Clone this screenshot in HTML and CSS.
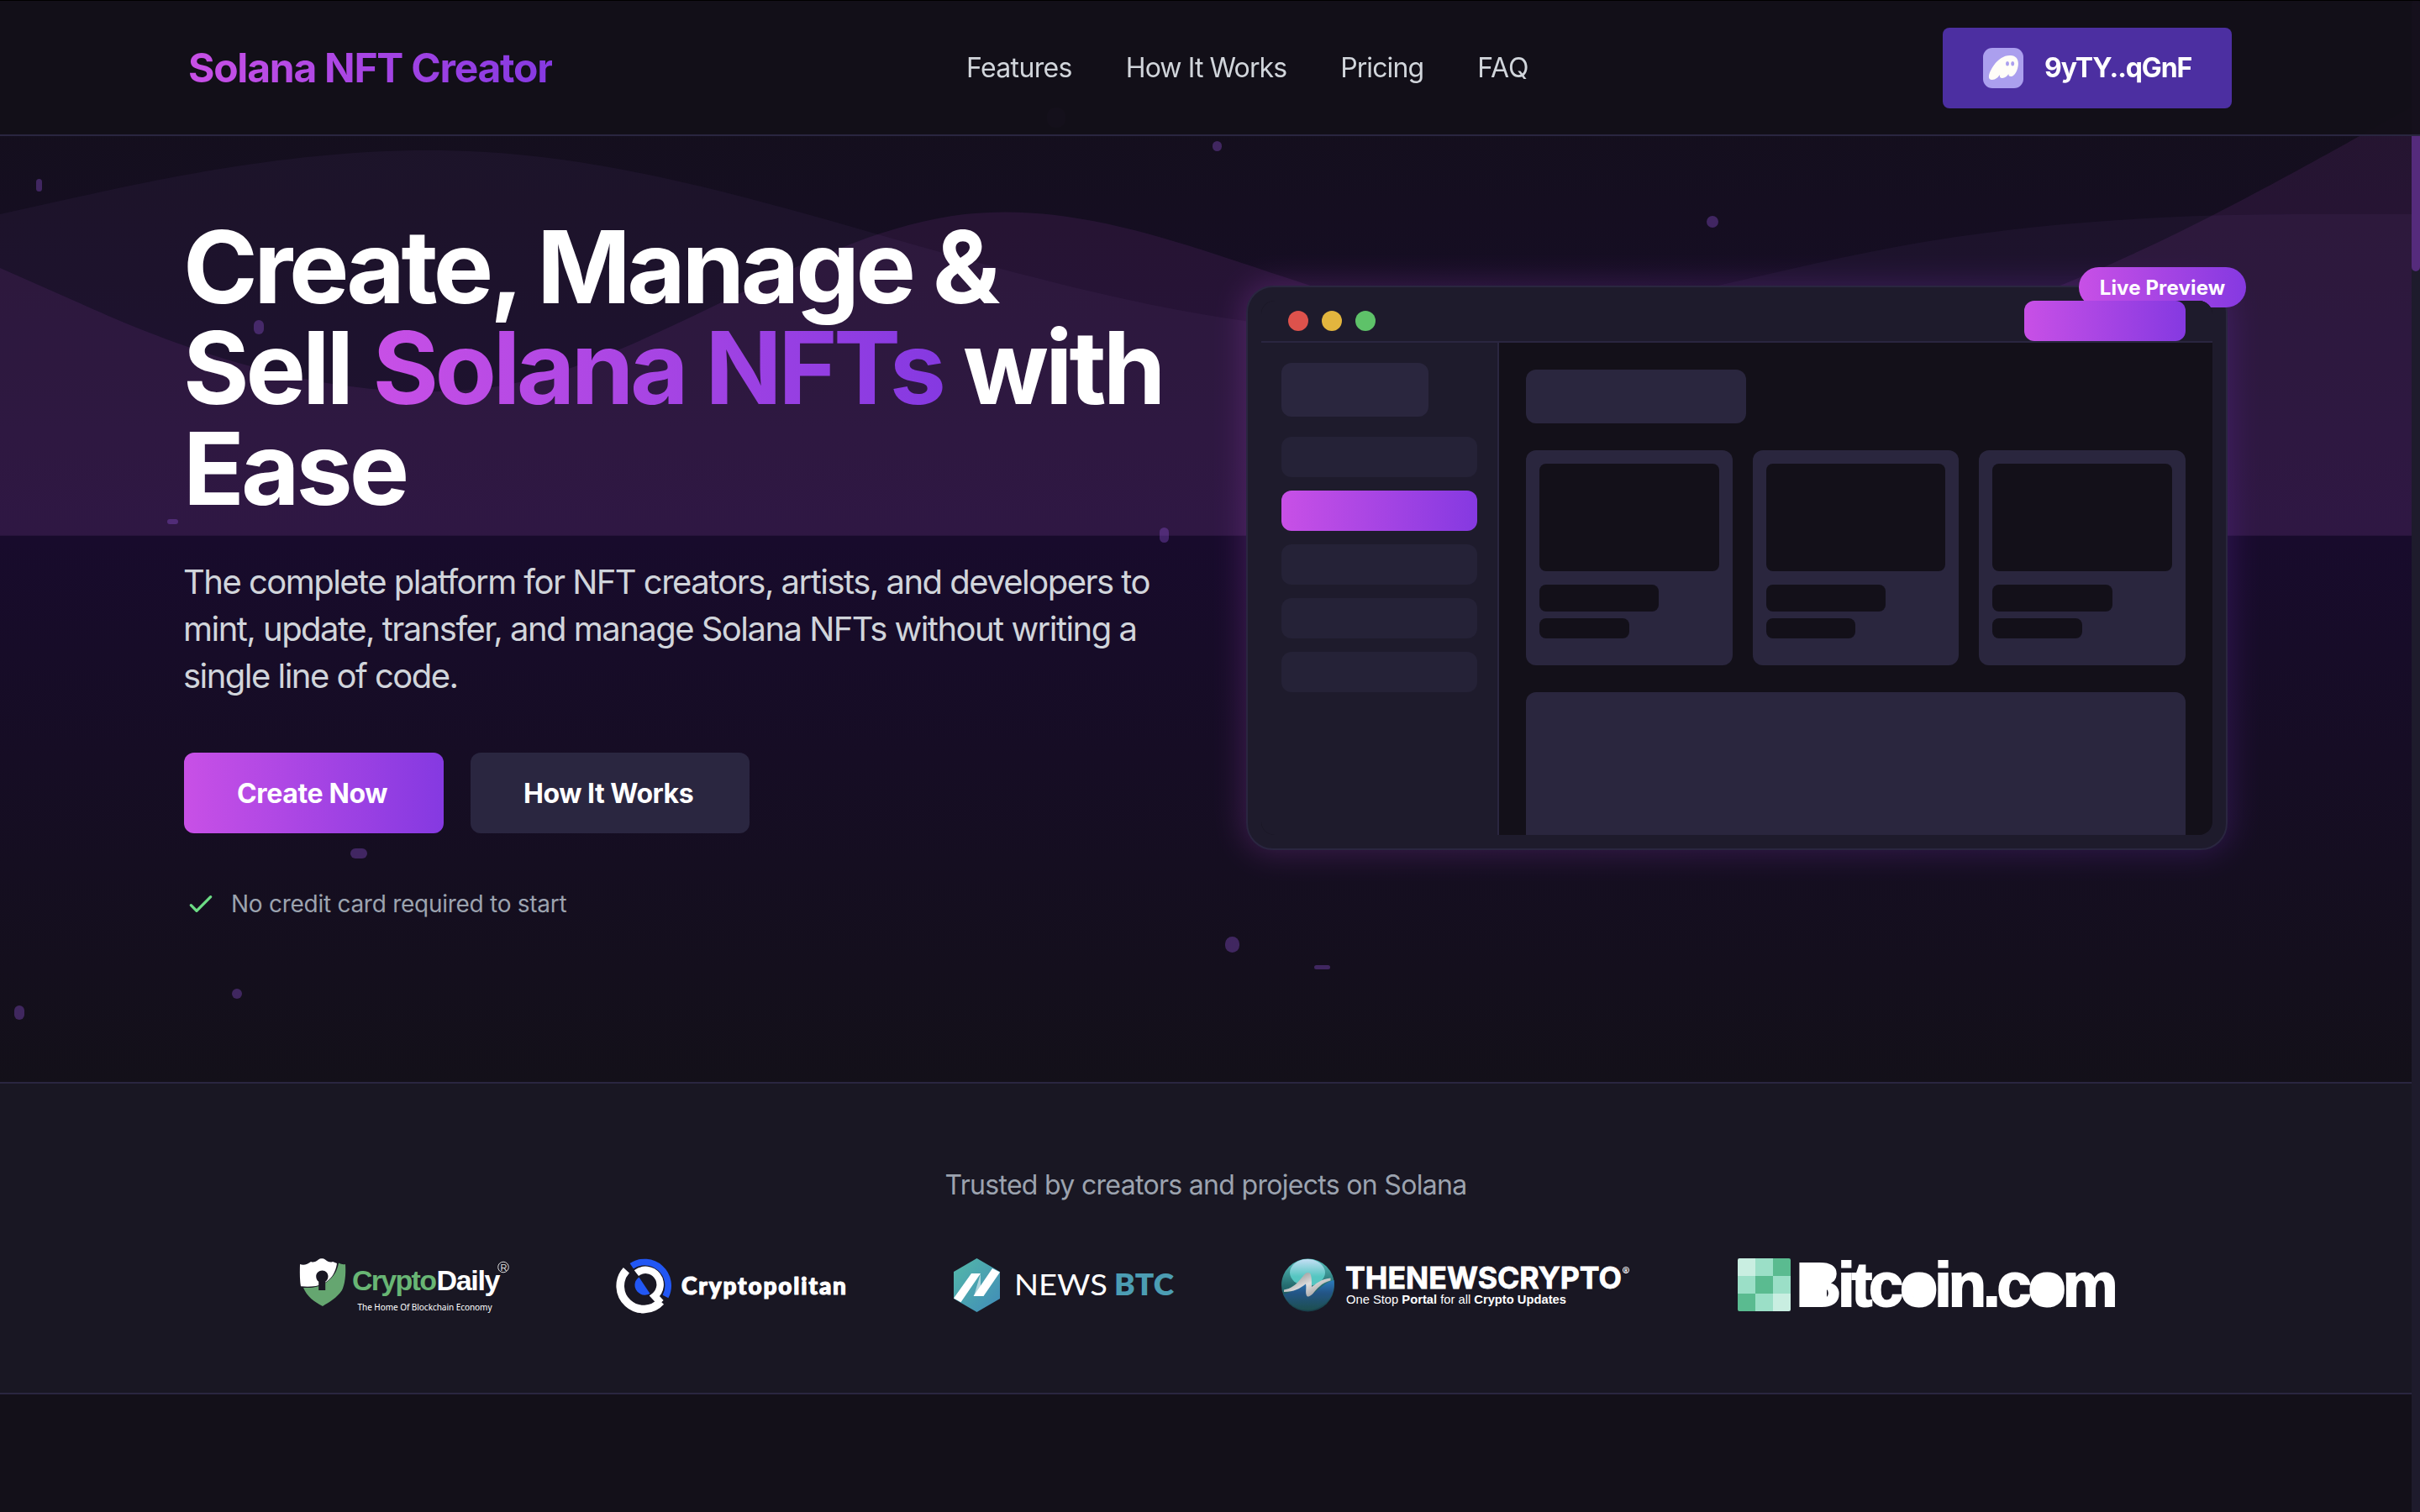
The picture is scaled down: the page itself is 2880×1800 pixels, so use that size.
FILE: index.html
```html
<!DOCTYPE html>
<html lang="en">
<head>
<meta charset="utf-8">
<title>Solana NFT Creator</title>
<link rel="stylesheet" href="styles.css">
</head>
<body>
<header class="header">
  <div class="header-inner">
    <a class="brand">Solana NFT Creator</a>
    <nav class="nav">
      <a class="nav-features">Features</a>
      <a>How It Works</a>
      <a>Pricing</a>
      <a class="nav-faq">FAQ</a>
    </nav>
    <button class="wallet">
      <svg class="wallet-icon" viewBox="0 0 48 48">
        <rect width="48" height="48" rx="11" fill="#ab9fee"/>
        <path fill="#fffdf8" d="M33 9c-8-.5-15 4.500-20 11.500-3.300 4.700-6.100 10-6.100 14 0 2 1.200 3.500 3.800 3.500 4.300 0 7.300-3.200 9.400-6-.6 2.600.2 4.100 2.800 4.100 3.200 0 5.600-2.200 7.500-5-.3 2 .8 3 2.800 3 4.800 0 8.500-8.400 8.700-15C42.100 13 38.500 9.300 33 9z"/>
        <ellipse cx="29" cy="18.800" rx="2" ry="2.700" fill="#ab9fee"/>
        <ellipse cx="35.200" cy="18.800" rx="2" ry="2.700" fill="#ab9fee"/>
      </svg>
      <span>9yTY..qGnF</span>
    </button>
  </div>
</header>

<main class="page">
  <section class="hero">
    <svg class="waves" viewBox="0 0 1440 320">
      <path class="wave-back" d="M0,128L48,117.300C96,107,192,85,288,90.700C384,96,480,128,576,154.700C672,181,768,203,864,197.300C960,192,1056,160,1152,144C1248,128,1344,128,1392,128L1440,128L1440,320L0,320Z"/>
      <path class="wave-front" d="M0,160L48,181.300C96,203,192,243,288,232C384,221,480,139,576,128C672,117,768,176,864,192C960,208,1056,213,1152,197.300C1248,171,1344,117,1392,90.700L1440,64L1440,320L0,320Z"/>
    </svg>
    <i class="dot p1"></i><i class="dot p2"></i><i class="dot p3"></i><i class="dot p4"></i>
    <i class="dot p5"></i><i class="dot p6"></i><i class="dot p7"></i><i class="dot p8"></i>
    <i class="dot p9"></i><i class="dot p10"></i><i class="dot p11"></i><i class="dot p12"></i>

    <div class="hero-grid">
      <div class="copy">
        <h1 class="title"><span class="first">Create, Manage &amp;</span><br>Sell <span class="accent">Solana NFTs</span> with<br>Ease</h1>
        <p class="lead">The complete platform for NFT creators, artists, and developers to<br>mint, update, transfer, and manage Solana NFTs without writing a<br>single line of code.</p>
        <div class="actions">
          <a class="btn btn-primary">Create Now</a>
          <a class="btn btn-secondary">How It Works</a>
        </div>
        <div class="note">
          <svg class="check" viewBox="0 0 24 24"><path d="M5 13l4 4L19 7"/></svg>
          <span>No credit card required to start</span>
        </div>
      </div>

      <div class="preview">
        <div class="glow"></div>
        <div class="frame">
          <div class="badge">Live Preview</div>
          <div class="screen">
            <div class="toolbar">
              <div class="lights"><i class="red"></i><i class="yellow"></i><i class="green"></i></div>
              <div class="pill"></div>
            </div>
            <div class="body">
              <div class="side">
                <div class="side-title"></div>
                <div class="side-item"></div>
                <div class="side-item active"></div>
                <div class="side-item"></div>
                <div class="side-item"></div>
                <div class="side-item"></div>
              </div>
              <div class="content">
                <div class="content-title"></div>
                <div class="cards">
                  <div class="card"><div class="thumb"></div><div class="line-a"></div><div class="line-b"></div></div>
                  <div class="card"><div class="thumb"></div><div class="line-a"></div><div class="line-b"></div></div>
                  <div class="card"><div class="thumb"></div><div class="line-a"></div><div class="line-b"></div></div>
                </div>
                <div class="panel"></div>
              </div>
            </div>
          </div>
        </div>
      </div>
    </div>
  </section>

  <section class="trusted">
    <p class="trusted-title">Trusted by creators and projects on Solana</p>
    <div class="logos">
      <svg width="251" height="64" viewBox="0 0 251 64">
        <path fill="#fff" d="M1 7c4 1.500 9 .5 13-3 3 1.500 6 0 9-2.500 2-1.700 6-1.700 8 0 3 2.500 6 4 9 2.500l5 2C43 20 35 30 20 33c-7 1-13 .8-18 .3C.5 25 .8 15 1 7z"/>
        <path fill="#65a670" d="M47 5.500c3 1.500 5 2 8 1.500.6 10 .2 22-4 31C45 47 36 52 28 57 18 52 9 45 5 35c7 .3 16 0 23-4 11-5.500 17-14 19-25.500z"/>
        <path fill="#191723" d="M27.500 14.500c4 0 7 3 7 7 0 3-1.500 5-3.300 6.200V38h-8V27.700c-1.700-1.200-3-3.200-3-6.200 0-4 3.300-7 7.300-7z"/>
        <text x="63" y="38" class="t-arial" font-size="34" fill="#68b574" textLength="101">Crypto</text>
        <text x="163.500" y="38" class="t-arial" font-size="34" fill="#fff" textLength="76">Daily</text>
        <circle cx="243" cy="10.500" r="6.300" fill="none" stroke="#ddd" stroke-width="1"/>
        <text x="239.500" y="14.500" class="t-regular" font-size="11" fill="#ddd" textLength="7">R</text>
        <text x="69.500" y="61.500" class="t-noto" font-size="10" fill="#fff" textLength="160">The Home Of Blockchain Economy</text>
      </svg>
      <svg width="272" height="64" viewBox="0 0 272 64">
        <path d="M10.400 14.200A26.800 26.800 0 1 0 51.500 51.500" fill="none" stroke="#fff" stroke-width="9.600"/>
        <path d="M22.400 17.600A17 17 0 0 1 44 45L51.500 53" fill="none" stroke="#fff" stroke-width="8.500"/>
        <path d="M16.700 9.200A28 28 0 0 1 57 45.500" fill="none" stroke="#2257f4" stroke-width="7.600"/>
        <path fill="#2257f4" d="M25.500 22.500L38.500 42c-6 3.500-13 1.500-16.500-4.500-3-5.500-1.500-11.500 3.500-15z"/>
        <text x="76" y="43" class="t-round" font-size="28" fill="#fff" stroke="#fff" stroke-width="1.200" stroke-linejoin="round" textLength="196">Cryptopolitan</text>
      </svg>
      <svg width="262" height="64" viewBox="0 0 262 64">
        <defs><linearGradient id="hex" x1="0" y1="0" x2="1" y2="1"><stop offset="0" stop-color="#54b9a9"/><stop offset="1" stop-color="#408bb8"/></linearGradient></defs>
        <path fill="url(#hex)" d="M27.500 0L55 16v32L27.500 64 0 48V16z"/>
        <path fill="#fff" opacity=".55" d="M32 18v20l-8 7z"/>
        <path fill="#fff" d="M21 18h11L8.500 52.200 0 47.500zM46 12l9 4.500L35.500 45H23.500z"/>
        <text x="72" y="44" class="t-lato" font-size="35" fill="#fff" textLength="111" lengthAdjust="spacingAndGlyphs">NEWS</text>
        <text x="191" y="44" class="t-lato-bold" font-size="35" fill="#4c9db3" textLength="71" lengthAdjust="spacingAndGlyphs">BTC</text>
      </svg>
      <svg width="415" height="64" viewBox="0 0 415 64">
        <defs>
          <linearGradient id="ball" x1="0" y1="0" x2="0" y2="1"><stop offset="0" stop-color="#58c3bf"/><stop offset=".5" stop-color="#256d70"/><stop offset="1" stop-color="#173d49"/></linearGradient>
          <linearGradient id="shine" x1="0" y1="0" x2="0" y2="1"><stop offset="0" stop-color="#c4def4"/><stop offset=".65" stop-color="#55c6c1"/></linearGradient>
          <linearGradient id="sea" x1="0" y1="0" x2="0" y2="1"><stop offset="0" stop-color="#2d80c4"/><stop offset=".45" stop-color="#235587"/><stop offset="1" stop-color="#1d4f50"/></linearGradient>
          <linearGradient id="steel" x1="0" y1="0" x2="1" y2="1"><stop offset="0" stop-color="#777"/><stop offset=".5" stop-color="#ddd"/><stop offset="1" stop-color="#888"/></linearGradient>
        </defs>
        <circle cx="31.500" cy="32" r="31.500" fill="url(#ball)"/>
        <ellipse cx="31" cy="17" rx="21" ry="16" fill="url(#shine)"/>
        <path fill="url(#sea)" d="M2.500 43c10-2 18-10 27-19l3 20c8-1 15-14 30-18A31.500 31.500 0 0 1 2.500 43z"/>
        <path fill="url(#steel)" d="M3 37.500c9-1.500 15-7 20-13 3.500-4 5.500-7.500 8.500-7.500 4 0 4.500 4 4.500 17 7-5 11-9 22.500-10.500v3c-11 2.500-16 10-21 15.500-4 4-7 5-8 1-1-4 .5-8-.5-12.500-7 5.500-14 9.500-26 9.500z"/>
        <text x="76" y="36" class="t-inter-bold" font-size="35.500" fill="#fff" stroke="#fff" stroke-width=".8" textLength="329" lengthAdjust="spacingAndGlyphs">THENEWSCRYPTO</text>
        <circle cx="410" cy="14" r="3.600" fill="none" stroke="#fff" stroke-width="1"/>
        <text x="408" y="16.500" class="t-inter-bold" font-size="6" fill="#fff">R</text>
        <text x="77" y="53.500" class="t-archivo" font-size="15" fill="#fff" textLength="262" lengthAdjust="spacingAndGlyphs">One Stop <tspan font-weight="700">Portal</tspan> for all <tspan font-weight="700">Crypto Updates</tspan></text>
      </svg>
      <svg width="449" height="64" viewBox="0 0 449 64">
        <g>
          <path fill="#c9eee1" d="M2 0h19v21H0V2a2 2 0 0 1 2-2zM42 42h21v19a2 2 0 0 1-2 2H42z"/>
          <path fill="#9bdfc7" d="M21 0h21v21H21zM0 21h21v21H0zM42 21h21v21H42zM21 42h21v21H21z"/>
          <path fill="#5abb90" d="M42 0h19a2 2 0 0 1 2 2v19H42zM21 21h21v21H21zM0 42h21v21H2a2 2 0 0 1-2-2z"/>
        </g>
        <rect x="80" y="10" width="26" height="42" fill="#fff"/>
        <ellipse cx="220" cy="37" rx="14" ry="16" fill="#fff"/>
        <ellipse cx="369" cy="37" rx="14" ry="16" fill="#fff"/>
        <text x="69.500" y="56.500" class="t-arial" font-size="74" fill="#fff" stroke="#fff" stroke-width="2" textLength="383">Bitcoin.com</text>
      </svg>
    </div>
  </section>
</main>
<div class="scrollbar"><div class="scroll-thumb"></div></div>
</body>
</html>
```
FILE: styles.css
```css
* { box-sizing: border-box; }
body {
  margin: 0;
  height: 1800px;
  overflow: hidden;
  background: #131019;
  color: #fff;
  font-family: Inter, "Liberation Sans", sans-serif;
}

/* Header */
.header {
  position: fixed;
  inset: 0 0 auto 0;
  z-index: 10;
  height: 162px;
  background: rgba(19, 16, 24, .96);
  border-top: 1px solid #000;
  border-bottom: 2px solid #2a2640;
}
.header-inner {
  display: flex;
  align-items: center;
  justify-content: space-between;
  width: 2560px;
  height: 159px;
  margin: 0 auto;
  padding: 0 64px;
}
.brand {
  font-size: 48px;
  font-weight: 700;
  letter-spacing: -1.250px;
  background: linear-gradient(90deg, #c850e6, #8539e1);
  -webkit-background-clip: text;
  background-clip: text;
  color: transparent;
}
.nav {
  display: flex;
  gap: 64px;
  font-size: 32px;
  letter-spacing: -.900px;
  color: #d1d5db;
}
.nav-features { letter-spacing: -.650px; }
.nav-faq { letter-spacing: -.050px; }
.wallet {
  display: flex;
  align-items: center;
  gap: 25px;
  width: 344px;
  height: 96px;
  padding: 0 48px;
  border: 0;
  border-radius: 8px;
  background: #4c2fa1;
  color: #fff;
  font: 700 32px Inter, sans-serif;
  letter-spacing: -1.100px;
  white-space: nowrap;
}
.wallet-icon { flex: none; width: 48px; height: 48px; }

.page { width: 2870px; }

/* Hero */
.hero {
  position: relative;
  height: 1288px;
  padding: 256px 0 192px;
  background: linear-gradient(180deg, #131019, #180b2c 50%, #131019);
}
.waves {
  position: absolute;
  top: 0;
  left: 0;
  width: 2870px;
  height: 637.800px;
}
.wave-back { fill: #301e42; fill-opacity: .32; }
.wave-front { fill: #c850e6; fill-opacity: .095; }

.dot { position: absolute; border-radius: 10px; background: #8a50cc; opacity: .38; }
.p1 { left: 43px; top: 213px; width: 7px; height: 15px; }
.p2 { left: 302px; top: 381px; width: 12px; height: 17px; }
.p3 { left: 199px; top: 618px; width: 13px; height: 6px; }
.p4 { left: 1380px; top: 628px; width: 11px; height: 18px; }
.p5 { left: 1443px; top: 168px; width: 11px; height: 12px; }
.p6 { left: 2031px; top: 257px; width: 14px; height: 14px; }
.p7 { left: 417px; top: 1010px; width: 20px; height: 12px; }
.p8 { left: 276px; top: 1177px; width: 12px; height: 12px; }
.p9 { left: 17px; top: 1197px; width: 12px; height: 17px; }
.p10 { left: 1458px; top: 1115px; width: 17px; height: 19px; }
.p11 { left: 1564px; top: 1149px; width: 19px; height: 5px; }
.p12 { left: 1246px; top: 128px; width: 22px; height: 24px; }

.hero-grid {
  position: relative;
  display: grid;
  grid-template-columns: 1fr 1fr;
  gap: 96px;
  align-items: center;
  width: 2560px;
  margin: 0 auto;
  padding: 0 64px;
}
.title {
  margin: 0 0 46px -1px;
  padding-top: 2px;
  font-size: 120px;
  line-height: 120px;
  font-weight: 700;
  letter-spacing: -4px;
  white-space: nowrap;
}
.first { letter-spacing: -4.400px; }
.accent {
  margin-left: 2px;
  letter-spacing: -4.500px;
  background: linear-gradient(90deg, #c850e6, #8539e1);
  -webkit-background-clip: text;
  background-clip: text;
  color: transparent;
}
.lead {
  margin: 0 0 63px -1px;
  padding-top: 1px;
  font-size: 40px;
  line-height: 56px;
  letter-spacing: -1.530px;
  color: #d1d5db;
  white-space: nowrap;
}
.actions { display: flex; gap: 32px; margin-bottom: 64px; }
.btn {
  display: flex;
  align-items: center;
  height: 96px;
  border-radius: 12px;
  font-size: 32px;
  font-weight: 700;
}
.btn-primary {
  width: 309px;
  padding-left: 63px;
  letter-spacing: -.350px;
  background: linear-gradient(90deg, #c850e6, #8539e1);
}
.btn-secondary {
  width: 332px;
  padding-left: 63px;
  letter-spacing: -.480px;
  background: #2a2640;
}
.note {
  display: flex;
  align-items: center;
  gap: 16px;
  height: 40px;
  font-size: 28px;
  letter-spacing: -.270px;
  color: #9ca3af;
}
.check {
  width: 40px;
  height: 40px;
  fill: none;
  stroke: #6cdc85;
  stroke-width: 2;
  stroke-linecap: round;
  stroke-linejoin: round;
}

/* Product preview */
.preview { position: relative; height: 672px; }
.glow {
  position: absolute;
  inset: -4px;
  border-radius: 36px;
  background: linear-gradient(90deg, #c850e6, #8539e1);
  filter: blur(18px);
  opacity: .21;
}
.frame {
  position: relative;
  height: 672px;
  padding: 16px;
  border: 2px solid #2a2640;
  border-radius: 32px;
  background: #1e1b2c;
}
.badge {
  position: absolute;
  top: -24px;
  right: -24px;
  width: 199px;
  height: 48px;
  border-radius: 24px;
  background: linear-gradient(90deg, #c850e6, #8539e1);
  font-size: 24px;
  line-height: 49px;
  font-weight: 700;
  letter-spacing: .150px;
  text-align: center;
}
.screen {
  position: relative;
  display: flex;
  flex-direction: column;
  height: 636px;
  overflow: hidden;
  border-radius: 16px;
  background: #131019;
}
.toolbar {
  display: flex;
  align-items: center;
  justify-content: space-between;
  flex: none;
  height: 50px;
  padding: 0 32px;
  border-bottom: 2px solid #2a2640;
  background: #1e1b2c;
}
.lights { display: flex; gap: 16px; }
.lights i { width: 24px; height: 24px; border-radius: 50%; }
.red { background: #dd524c; }
.yellow { background: #e2b53e; }
.green { background: #5ec269; }
.pill {
  width: 192px;
  height: 48px;
  border-radius: 12px;
  background: linear-gradient(90deg, #c850e6, #8539e1);
}
.body { display: flex; flex: 1; min-height: 0; }
.side {
  flex: none;
  width: 283px;
  padding: 24px;
  border-right: 2px solid #2a2640;
  background: #1e1b2c;
}
.side-title {
  width: 75%;
  height: 64px;
  margin-bottom: 24px;
  border-radius: 12px;
  background: #2a263e;
}
.side-item {
  height: 48px;
  margin-bottom: 16px;
  border-radius: 12px;
  background: #252237;
}
.side-item.active { background: linear-gradient(90deg, #c850e6, #8539e1); }
.content { flex: 1; padding: 32px; }
.content-title {
  width: 262px;
  height: 64px;
  margin-bottom: 32px;
  border-radius: 12px;
  background: #2a263e;
}
.cards {
  display: grid;
  grid-template-columns: repeat(3, 1fr);
  gap: 24px;
  margin-bottom: 32px;
}
.card {
  height: 256px;
  padding: 16px;
  border-radius: 12px;
  background: #2a263e;
}
.thumb { height: 128px; margin-bottom: 16px; border-radius: 8px; background: #131019; }
.line-a { width: 66.600%; height: 32px; margin-bottom: 8px; border-radius: 8px; background: #131019; }
.line-b { width: 50%; height: 24px; border-radius: 8px; background: #131019; }
.panel { height: 256px; border-radius: 12px; background: #2a263e; }

/* Press logos */
.trusted {
  height: 372px;
  padding: 97px 0 0;
  border-top: 2px solid #2a2640;
  border-bottom: 2px solid #2a2640;
  background: #191723;
}
.trusted-title {
  margin: 0 0 63px;
  font-size: 32px;
  line-height: 48px;
  letter-spacing: -.690px;
  text-align: center;
  color: #9ca3af;
}
.logos { display: flex; justify-content: center; gap: 128px; padding-left: 2px; }
.logos svg { flex: none; overflow: visible; }
.t-arial { font-family: "Liberation Sans", sans-serif; font-weight: 700; }
.t-regular { font-family: "Liberation Sans", sans-serif; }
.t-noto { font-family: "Noto Sans", sans-serif; }
.t-round { font-family: Lato, sans-serif; font-weight: 900; }
.t-lato { font-family: Lato, sans-serif; }
.t-lato-bold { font-family: Lato, sans-serif; font-weight: 800; }
.t-inter-bold { font-family: Inter, sans-serif; font-weight: 700; }
.t-archivo { font-family: "Liberation Sans", sans-serif; }

/* Scrollbar */
.scrollbar {
  position: fixed;
  top: 0;
  right: 0;
  width: 10px;
  height: 1800px;
  background: #1e1b2c;
}
.scroll-thumb { height: 323px; border-radius: 5px; background: #552b7c; }
```
